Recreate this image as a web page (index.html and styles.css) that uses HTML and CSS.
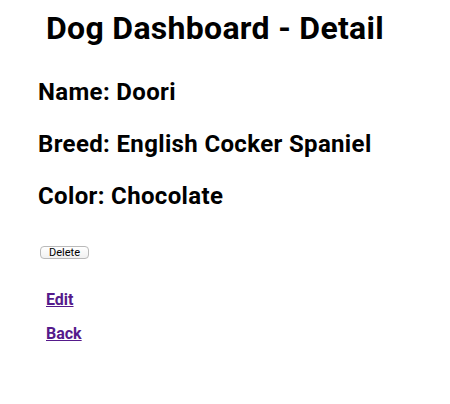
FILE: index.html
```html
<!DOCTYPE html>
<html lang="en">
<head>
<meta charset="utf-8">
<title>Dog Dashboard - Detail</title>
<link rel="stylesheet" href="styles.css">
</head>
<body>
<main class="page">
  <h1 class="title">Dog Dashboard - Detail</h1>
  <section class="details">
    <h2 class="field">Name: Doori</h2>
    <h2 class="field">Breed: English Cocker Spaniel</h2>
    <h2 class="field">Color: Chocolate</h2>
  </section>
  <form class="delete-form">
    <button type="button" class="btn-delete">Delete</button>
  </form>
  <nav class="links">
    <a class="link" href="#edit">Edit</a>
    <a class="link" href="#back">Back</a>
  </nav>
</main>
</body>
</html>
```
FILE: styles.css
```css
html, body {
  margin: 0;
  padding: 0;
  background: #ffffff;
}

body {
  font-family: Roboto, "Liberation Sans", sans-serif;
  color: #000000;
}

.page {
  display: flex;
  flex-direction: column;
  align-items: flex-start;
  padding: 9px 0 0 38px;
}

.title {
  margin: 0 0 31px 0;
  padding-left: 8px;
  font-size: 32px;
  line-height: 38px;
  font-weight: 700;
  letter-spacing: 0.3px;
}

.details {
  display: flex;
  flex-direction: column;
  gap: 24px;
}

.field {
  margin: 0;
  font-size: 24px;
  line-height: 28px;
  font-weight: 700;
  letter-spacing: 0.35px;
}

.delete-form {
  margin: 36px 0 0 2px;
}

.btn-delete {
  display: block;
  height: 13px;
  padding: 0 8px;
  margin: 0;
  font-family: Roboto, "Liberation Sans", sans-serif;
  font-size: 11px;
  line-height: 11px;
  color: #000000;
  background: linear-gradient(#ffffff, #f1f1f1);
  border: 1px solid #b9b9b9;
  border-radius: 4px;
}

.links {
  display: flex;
  flex-direction: column;
  align-items: flex-start;
  gap: 15px;
  margin: 31px 0 0 8px;
}

.link {
  font-size: 16px;
  line-height: 19px;
  font-weight: 700;
  color: #551a8b;
  text-decoration: underline;
}
```
